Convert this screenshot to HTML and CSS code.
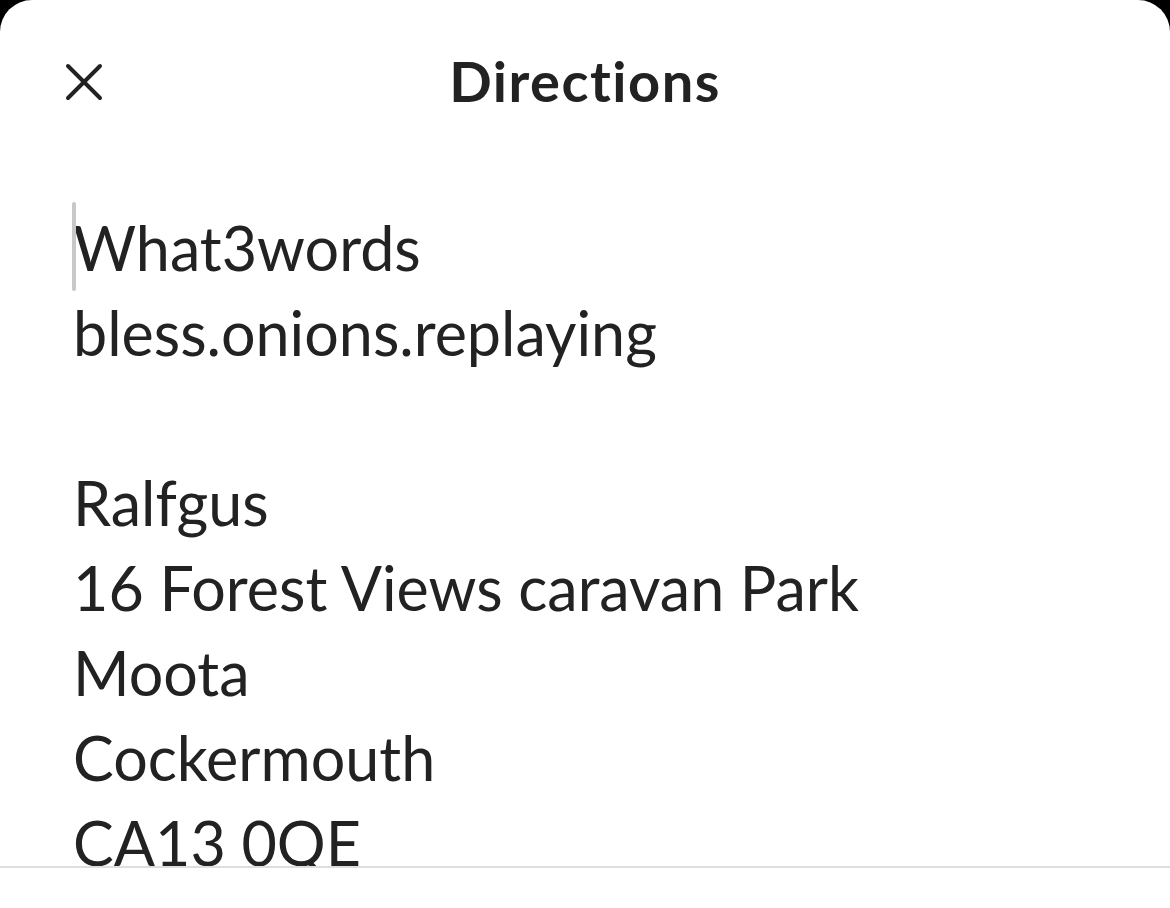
FILE: index.html
```html
<!DOCTYPE html>
<html>
<head>
<meta charset="utf-8">
<link rel="stylesheet" href="styles.css">
</head>
<body>
<div class="sheet">
  <header class="header">
    <button class="close" aria-label="Close">
      <svg width="38" height="38" viewBox="0 0 38 38"><path d="M3 3 L35 35 M35 3 L3 35" stroke="#222" stroke-width="4" stroke-linecap="round" fill="none"/></svg>
    </button>
    <h1 class="title">Directions</h1>
  </header>
  <main class="content">
    <div class="text"><div class="line first"><span class="caret"></span>What3words</div><div class="line">bless.onions.replaying</div><div class="line">&nbsp;</div><div class="line">Ralfgus</div><div class="line">16 Forest Views caravan Park</div><div class="line">Moota</div><div class="line">Cockermouth</div><div class="line">CA13 0QE</div></div>
  </main>
  <footer class="footer"></footer>
</div>
</body>
</html>
```
FILE: styles.css
```css
html, body {
  margin: 0;
  padding: 0;
  background: #000;
}
.sheet {
  width: 1170px;
  height: 908px;
  background: #fff;
  border-radius: 32px 32px 0 0;
  display: flex;
  flex-direction: column;
  overflow: hidden;
  font-family: Lato, "Noto Sans", sans-serif;
  color: #222;
}
.header {
  position: relative;
  height: 166px;
  flex: none;
  display: flex;
  align-items: center;
  justify-content: center;
}
.close {
  position: absolute;
  left: 65px;
  top: 63px;
  border: 0;
  padding: 0;
  background: none;
  width: 38px;
  height: 38px;
}
.close svg { display: block; }
.title {
  margin: 0;
  font-size: 56px;
  font-weight: 700;
  letter-spacing: 1.5px;
  line-height: 1;
  margin-top: -4px;
}
.content {
  flex: 1;
  overflow: hidden;
  padding-left: 73px;
}
.text {
  margin-top: 39px;
  font-size: 61px;
  line-height: 85px;
  font-weight: 400;
  white-space: nowrap;
}
.line { height: 85px; }
.first { position: relative; }
.caret {
  position: absolute;
  left: -1px;
  top: -3px;
  width: 4px;
  height: 89px;
  background: #c8c8c8;
  border-radius: 2px;
}
.footer {
  flex: none;
  height: 40px;
  border-top: 2px solid #dedede;
}
```
